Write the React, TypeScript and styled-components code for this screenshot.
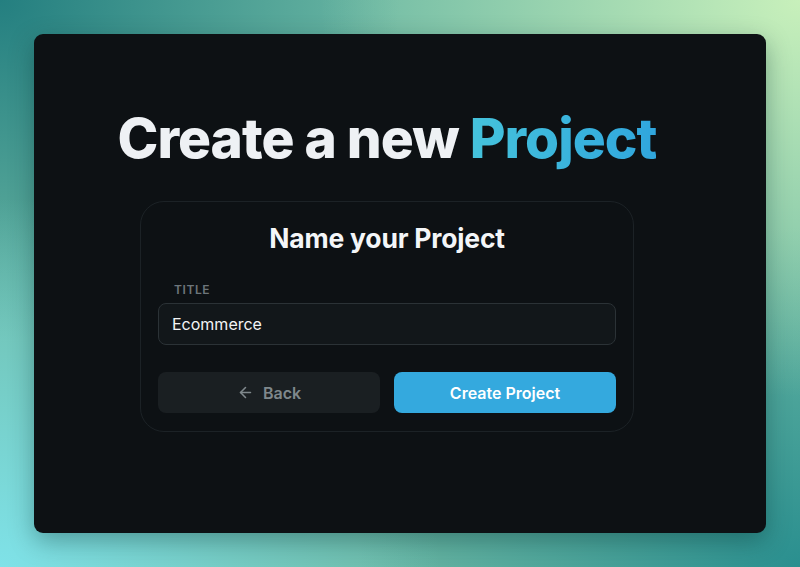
import React, { useState } from "react";
import styled, { createGlobalStyle } from "styled-components";

const GlobalStyle = createGlobalStyle`
  html, body {
    margin: 0;
    padding: 0;
    width: 800px;
    height: 567px;
    overflow: hidden;
  }
  body {
    font-family: "Inter", "Liberation Sans", sans-serif;
    background:
      radial-gradient(ellipse 60% 70% at 100% 0%, #c8f0bb 0%, rgba(200, 240, 187, 0) 100%),
      radial-gradient(ellipse 55% 65% at 0% 100%, #7fe2e8 0%, rgba(127, 226, 232, 0) 100%),
      radial-gradient(ellipse 55% 60% at 100% 100%, #2a8f8f 0%, rgba(42, 143, 143, 0) 100%),
      radial-gradient(ellipse 50% 60% at 0% 0%, #247f80 0%, rgba(36, 127, 128, 0) 100%),
      #6cb8a4;
  }
`;

const Stage = styled.div`
  width: 800px;
  height: 567px;
  padding: 34px;
  box-sizing: border-box;
`;

const Window = styled.div`
  height: 100%;
  background: #0d1114;
  border-radius: 9px;
  box-shadow: 0 8px 24px rgba(0, 40, 40, 0.35);
  display: flex;
  flex-direction: column;
  align-items: center;
  padding: 71px 26px 0 0;
  box-sizing: border-box;
`;

const Heading = styled.h1`
  margin: 0;
  font-size: 55px;
  font-weight: 800;
  letter-spacing: -1px;
  line-height: 66px;
  color: #eef1f4;
`;

const Accent = styled.span`
  background: linear-gradient(90deg, #45c3dc 0%, #30a6dd 100%);
  -webkit-background-clip: text;
  background-clip: text;
  color: transparent;
`;

const Card = styled.div`
  margin-top: 30px;
  width: 494px;
  box-sizing: border-box;
  border: 1px solid #1c2226;
  border-radius: 24px;
  padding: 19px 17px 18px;
  display: flex;
  flex-direction: column;
`;

const CardTitle = styled.h2`
  margin: 0;
  text-align: center;
  font-size: 26.5px;
  font-weight: 700;
  line-height: 34px;
  color: #f4f6f8;
  letter-spacing: -0.2px;
`;

const Label = styled.label`
  margin: 28px 0 6px 16px;
  font-size: 12px;
  font-weight: 600;
  letter-spacing: 0.6px;
  color: #6d767b;
  line-height: 14px;
`;

const Input = styled.input`
  height: 42px;
  box-sizing: border-box;
  background: #12171a;
  border: 1px solid #2b3236;
  border-radius: 8px;
  padding: 0 13px;
  font-family: "Inter", "Liberation Sans", sans-serif;
  font-size: 16px;
  color: #f2f4f5;
  outline: none;
`;

const Actions = styled.div`
  margin-top: 27px;
  display: grid;
  grid-template-columns: 1fr 1fr;
  gap: 14px;
`;

const Button = styled.button<{ $primary?: boolean }>`
  height: 41px;
  border: none;
  border-radius: 8px;
  display: flex;
  align-items: center;
  justify-content: center;
  gap: 9px;
  font-family: "Inter", "Liberation Sans", sans-serif;
  font-size: 16px;
  font-weight: 600;
  cursor: pointer;
  background: ${(p) => (p.$primary ? "#34a9de" : "#1a1f22")};
  color: ${(p) => (p.$primary ? "#ffffff" : "#7f888c")};
`;

const ArrowLeft = () => (
  <svg width="17" height="17" viewBox="0 0 24 24" fill="none" stroke="currentColor" strokeWidth="2.2" strokeLinecap="round" strokeLinejoin="round">
    <path d="M19 12H5" />
    <path d="M12 19l-7-7 7-7" />
  </svg>
);

export default function App() {
  const [title, setTitle] = useState("Ecommerce");
  return (
    <Stage>
      <GlobalStyle />
      <Window>
        <Heading>
          Create a new <Accent>Project</Accent>
        </Heading>
        <Card>
          <CardTitle>Name your Project</CardTitle>
          <Label htmlFor="title">TITLE</Label>
          <Input id="title" value={title} onChange={(e) => setTitle(e.target.value)} />
          <Actions>
            <Button>
              <ArrowLeft />
              Back
            </Button>
            <Button $primary>Create Project</Button>
          </Actions>
        </Card>
      </Window>
    </Stage>
  );
}
